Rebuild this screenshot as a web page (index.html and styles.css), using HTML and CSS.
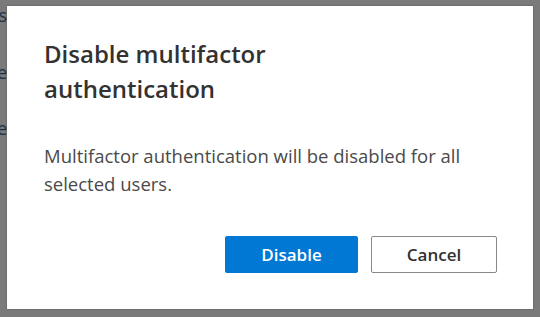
FILE: index.html
```html
<!DOCTYPE html>
<html lang="en">
<head>
    <meta charset="UTF-8">
    <title>Disable multifactor authentication</title>
    <link rel="stylesheet" href="styles.css">
</head>
<body>
    <div class="backdrop">
        <div class="page-edge">
            <span>s</span>
            <span>e</span>
            <span>e</span>
        </div>
        <div class="dialog">
            <h1>Disable multifactor authentication</h1>
            <p>Multifactor authentication will be disabled for all selected users.</p>
            <div class="actions">
                <button class="primary">Disable</button>
                <button class="secondary">Cancel</button>
            </div>
        </div>
    </div>
</body>
</html>
```

FILE: styles.css
```css
body {
    margin: 0;
    font-family: "Open Sans", "Noto Sans", sans-serif;
    background-color: #7a7a7a;
}

.backdrop {
    position: relative;
    width: 540px;
    height: 317px;
    padding: 6px 7px 8px 7px;
    box-sizing: border-box;
}

.page-edge {
    position: absolute;
    left: 0;
    top: 0;
    width: 7px;
    height: 317px;
    overflow: hidden;
    color: #20304a;
    font-size: 18px;
}

.page-edge span {
    position: absolute;
    right: 0;
}

.page-edge span:nth-child(1) { top: 3px; }
.page-edge span:nth-child(2) { top: 60px; }
.page-edge span:nth-child(3) { top: 116px; }

.dialog {
    background-color: #ffffff;
    height: 100%;
    box-sizing: border-box;
    padding: 30px 36px 0 37px;
    box-shadow: 0 0 2px rgba(0, 0, 0, 0.3);
}

h1 {
    margin: 0;
    font-size: 24px;
    line-height: 35px;
    font-weight: 600;
    color: #333231;
    width: 300px;
}

p {
    margin: 36px 0 0 0;
    font-size: 18.5px;
    line-height: 28px;
    color: #4a4a4a;
    width: 440px;
}

.actions {
    display: flex;
    justify-content: flex-end;
    gap: 13px;
    margin-top: 38px;
}

button {
    height: 37px;
    font-family: inherit;
    font-size: 17px;
    font-weight: 600;
    border-radius: 2px;
    cursor: pointer;
}

.primary {
    width: 133px;
    background-color: #0078d4;
    border: 1px solid #0078d4;
    color: #ffffff;
}

.secondary {
    width: 126px;
    background-color: #ffffff;
    border: 1px solid #8a8886;
    color: #323130;
}
```
